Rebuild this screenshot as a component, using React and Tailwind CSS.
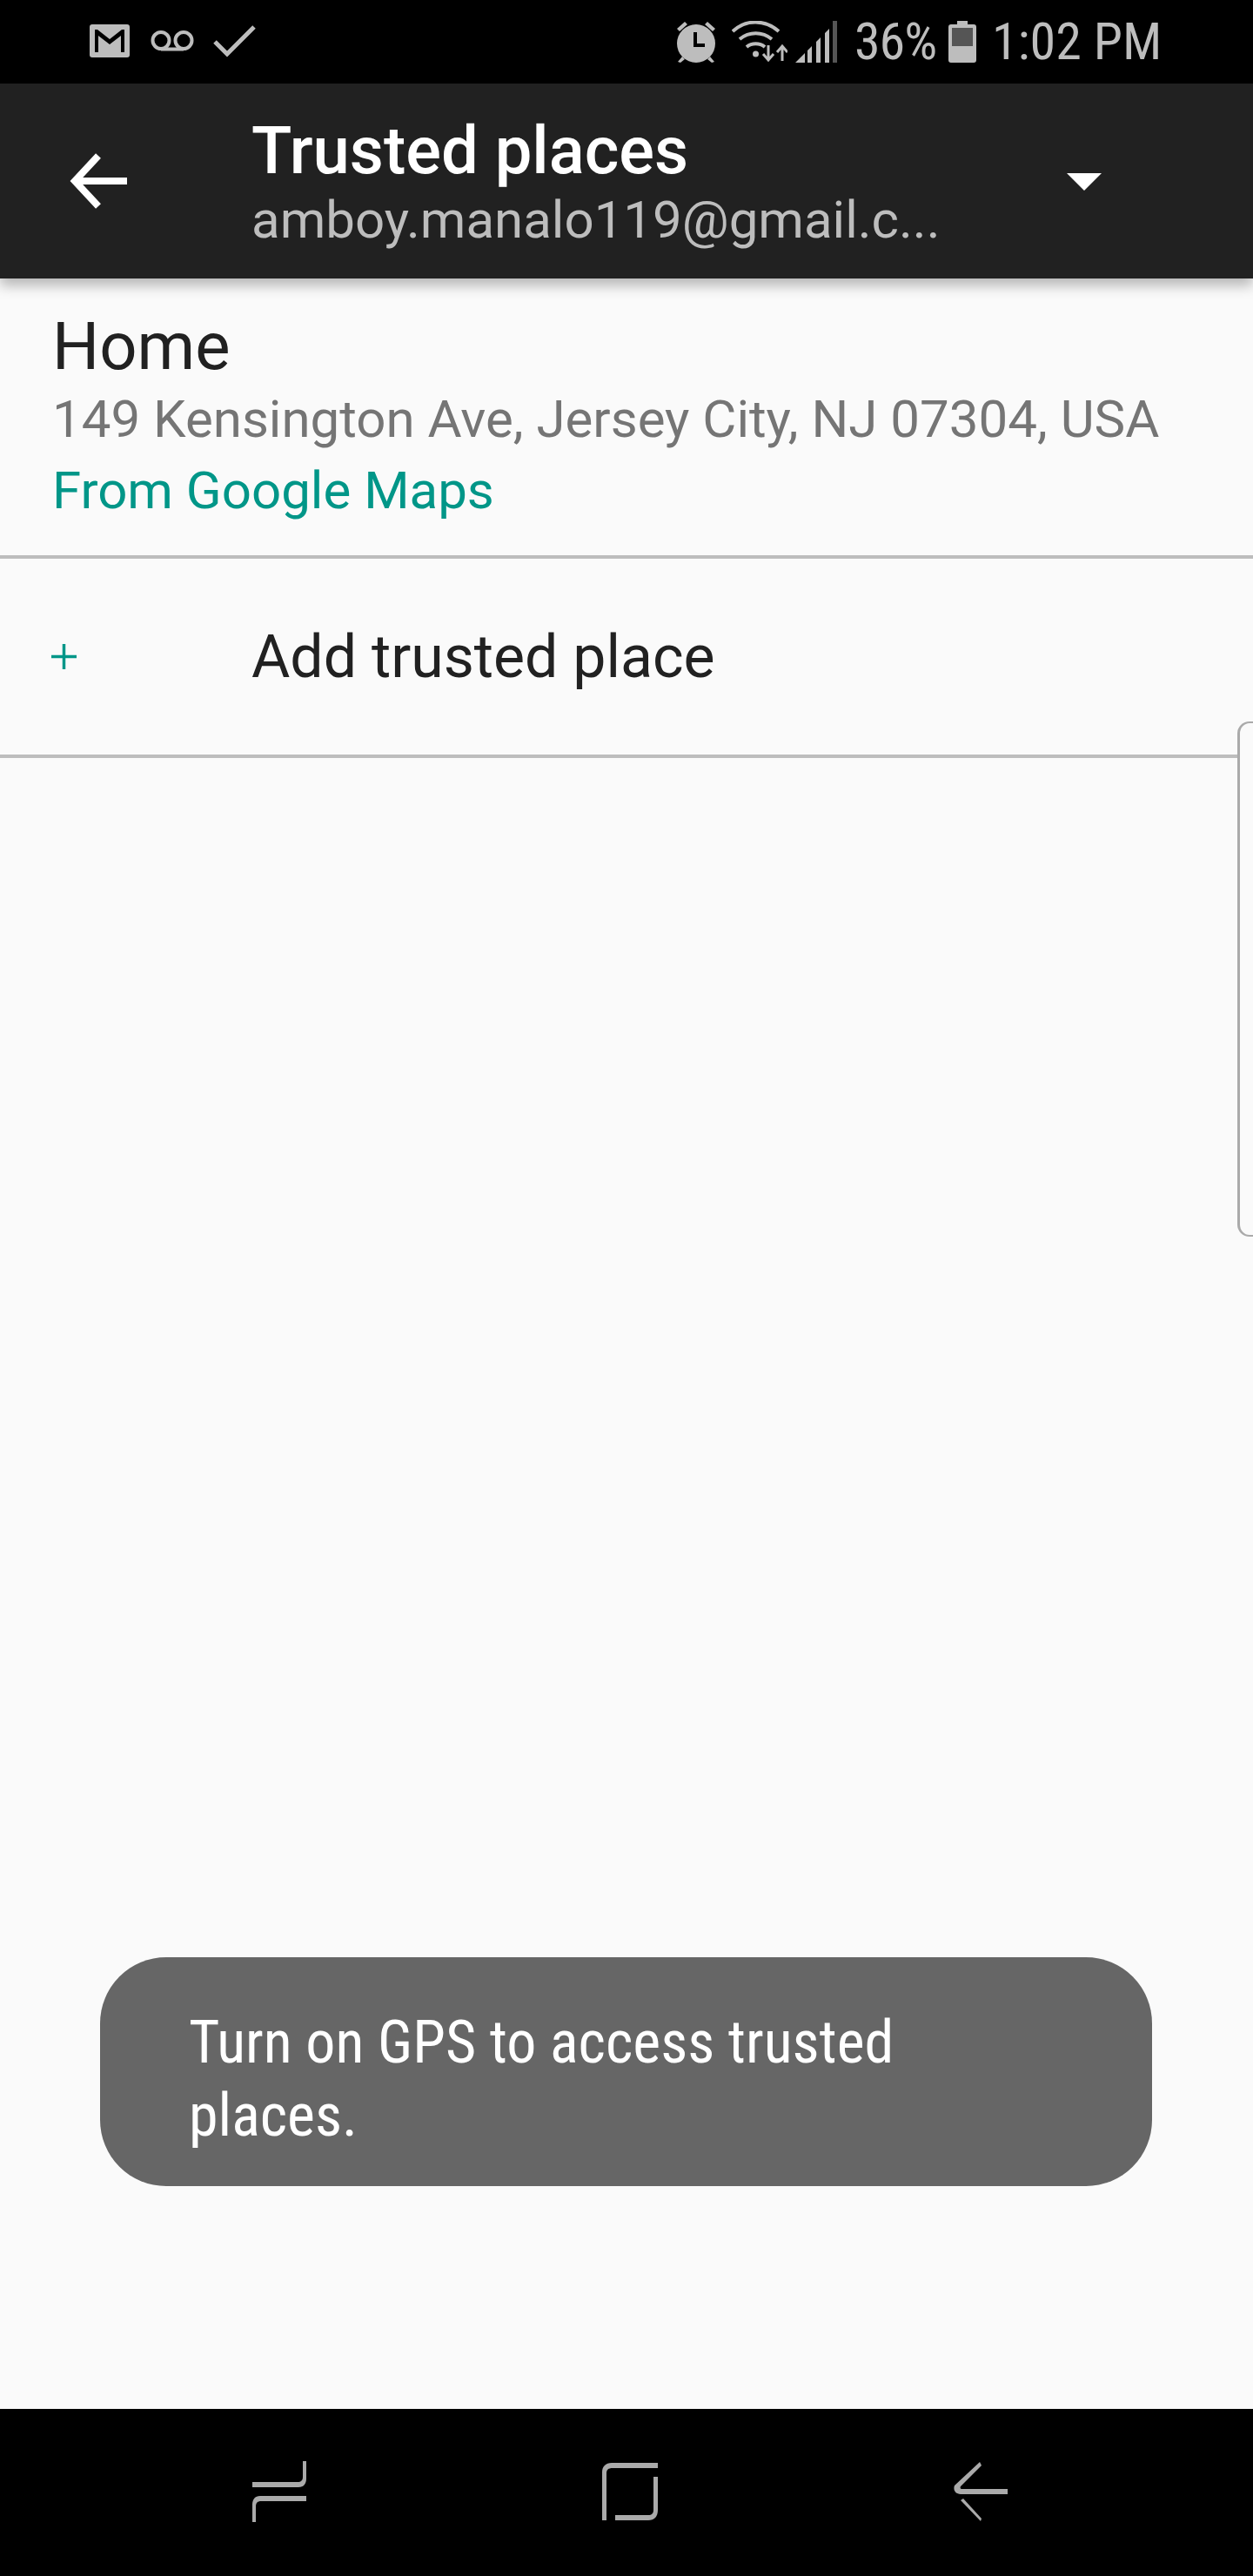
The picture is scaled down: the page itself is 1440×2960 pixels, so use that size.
import React from "react";

const StatusLeft = () => (
  <div className="flex items-center">
    <svg className="ml-[103px] mt-[-2px]" width="46" height="38" viewBox="0 0 46 38">
      <rect width="46" height="38" rx="3" fill="#bdbdbd" />
      <path d="M6 32V6h3l14 11L37 6h3v26h-4V13L23 23 10 13v19z" fill="#000" />
    </svg>
    <svg className="ml-[24px] mt-[-2px]" width="50" height="24" viewBox="0 0 50 24" fill="none" stroke="#bdbdbd" strokeWidth="4">
      <circle cx="12" cy="11.5" r="9.5" />
      <circle cx="38" cy="11.5" r="9.5" />
      <path d="M12 21.5h26" />
    </svg>
    <svg className="ml-[22px] mt-[-1px]" width="49" height="37" viewBox="0 0 49 37" fill="none" stroke="#bdbdbd" strokeWidth="5">
      <path d="M2 19l14 14L47 2" />
    </svg>
  </div>
);

const StatusRight = () => (
  <div className="flex items-center text-[#bdbdbd]">
    <svg width="48" height="48" viewBox="0 0 48 48">
      <path d="M2 9l9-8 3 3-9 8zM46 9l-9-8-3 3 9 8z" fill="#bdbdbd" />
      <circle cx="24" cy="26" r="22" fill="#bdbdbd" />
      <path d="M3 47l5-6 3 3-5 4zM45 47l-5-6-3 3 5 4z" fill="#bdbdbd" />
      <path d="M21 13h4v13h9v4H21z" fill="#000" />
    </svg>
    <svg className="ml-[17px]" width="64" height="48" viewBox="0 0 64 48" fill="none">
      <path d="M1 12C16-2 38-2 54 12" stroke="#bdbdbd" strokeWidth="4" />
      <path d="M9 21c11-9 26-9 37 0" stroke="#bdbdbd" strokeWidth="4" />
      <path d="M17 30c6-5 15-5 21 0" stroke="#bdbdbd" strokeWidth="4" />
      <circle cx="27.5" cy="38" r="3.5" fill="#bdbdbd" />
      <path d="M42 28v16M36 38l6 7 6-7" stroke="#bdbdbd" strokeWidth="3" />
      <path d="M58 46V30M52 36l6-7 6 7" stroke="#bdbdbd" strokeWidth="3" />
    </svg>
    <svg className="ml-[9px]" width="48" height="48" viewBox="0 0 48 48">
      <path d="M0 48l11-11v11zM14 34l5-5v19h-5zM24 24l5-5v29h-5zM34 14l5-5v39h-5z" fill="#bdbdbd" />
      <rect x="43" y="0" width="5" height="48" fill="#555" />
    </svg>
    <span className="ml-[20px] inline-block w-[94px] text-[60px] leading-[48px] [font-stretch:75%] tracking-[-1px] whitespace-nowrap">36%</span>
    <svg className="ml-[14px]" width="32" height="48" viewBox="0 0 32 48">
      <path d="M10 0h12v4h7a3 3 0 0 1 3 3v38a3 3 0 0 1-3 3H3a3 3 0 0 1-3-3V7a3 3 0 0 1 3-3h7z" fill="#bdbdbd" />
      <rect x="4" y="8" width="24" height="21" fill="#555" />
    </svg>
    <span className="ml-[18px] inline-block w-[191px] text-[60px] leading-[48px] [font-stretch:75%] whitespace-nowrap">1:02 PM</span>
  </div>
);

const RecentsIcon = () => (
  <svg width="62" height="70" viewBox="0 0 62 70" fill="#aaa">
    <path d="M58 0h4v20c0 6-3 10-9 10H0v-6h52c4 0 6-2 6-6z" />
    <path d="M62 40v6H10c-4 0-6 2-6 6v18H0V50c0-6 3-10 9-10z" />
  </svg>
);

const HomeIcon = () => (
  <svg width="64" height="66" viewBox="0 0 64 66" fill="#aaa">
    <path d="M64 0v6H12c-5 0-7 2-7 6v54H0V11C0 4 4 0 11 0z" />
    <path d="M59 16h5v38c0 8-4 12-11 12H15v-6h38c4 0 6-2 6-6z" />
  </svg>
);

const BackIcon = () => (
  <svg width="62" height="68" viewBox="0 0 62 68" fill="#aaa">
    <path d="M30 0l2 4L8 28c-1 2 0 3 2 3h52v6H8c-6 0-9-5-7-10z" />
    <path d="M8 44l3-2 21 23-1 3z" />
  </svg>
);

const App = () => {
  return (
    <div className="flex h-[2960px] w-[1440px] flex-col overflow-hidden bg-[#fafafa] font-['Roboto',sans-serif]">
      <div className="flex h-[96px] shrink-0 items-center justify-between bg-black pr-[109px]">
        <StatusLeft />
        <StatusRight />
      </div>

      <header className="relative z-10 flex h-[224px] shrink-0 items-center bg-[#212121] shadow-[0_8px_14px_rgba(0,0,0,0.28)]">
        <svg className="ml-[80px] shrink-0" width="66" height="64" viewBox="0 0 66 64" fill="none" stroke="#fff" strokeWidth="8">
          <path d="M66 32H6" />
          <path d="M33 3L6 32l27 29" />
        </svg>
        <div className="ml-[143px] w-[880px] pt-[2px]">
          <h1 className="text-[76px] leading-[88px] font-medium text-white">Trusted places</h1>
          <p className="text-[60px] leading-[72px] text-[#bdbdbd]">amboy.manalo119@gmail.c...</p>
        </div>
        <div className="ml-[57px] mt-[2px] h-0 w-0 border-x-[20px] border-t-[20px] border-x-transparent border-t-white"></div>
      </header>

      <main className="relative flex-1">
        <section className="h-[322px] border-b-4 border-[#bdbdbd] pl-[60px] pt-[36px]">
          <h2 className="text-[76px] leading-[84px] text-[#212121]">Home</h2>
          <p className="text-[60px] leading-[84px] text-[#757575]">149 Kensington Ave, Jersey City, NJ 07304, USA</p>
          <p className="text-[60px] leading-[80px] text-[#009688]">From Google Maps</p>
        </section>

        <section className="flex h-[229px] items-center border-b-4 border-[#bdbdbd] pl-[59px]">
          <svg className="shrink-0" width="29" height="29" viewBox="0 0 29 29" stroke="#009688" strokeWidth="3.5">
            <path d="M0 14.5h29M14.5 0v29" />
          </svg>
          <span className="ml-[201px] text-[68px] leading-[80px] text-[#212121]">Add trusted place</span>
        </section>

        {/* edge panel handle */}
        <div className="absolute right-0 top-[509px] h-[592px] w-[18px] rounded-l-[14px] border-y-2 border-l-[3px] border-[#aaa] bg-[#fafafa]"></div>

        {/* toast */}
        <div className="absolute left-[115px] top-[1929px] h-[263px] w-[1209px] rounded-[76px] bg-[#666666] pl-[102px] pt-[56px] text-[68px] leading-[84px] text-white [font-stretch:75%]">
          <p className="w-[900px]">Turn on GPS to access trusted places.</p>
        </div>
      </main>

      <nav className="flex h-[192px] shrink-0 items-center bg-black pb-[2px] pl-[290px]">
        <RecentsIcon />
        <div className="ml-[340px]"><HomeIcon /></div>
        <div className="ml-[340px]"><BackIcon /></div>
      </nav>
    </div>
  );
};

export default App;
